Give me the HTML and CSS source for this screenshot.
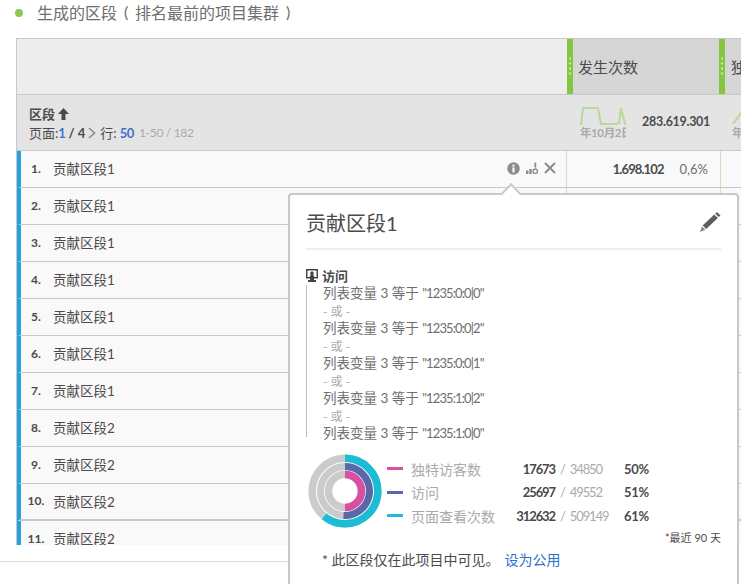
FILE: index.html
```html
<!DOCTYPE html>
<html lang="en">
<head>
  <meta charset="UTF-8">
  <title>生成的区段</title>
  <link rel="stylesheet" href="styles.css">
</head>
<body>
  <div class="page">
    <div class="title">
      <span class="title-dot"></span>
      <span>生成的区段</span><span class="title-paren">(</span><span>排名最前的项目集群</span><span class="title-paren">)</span>
    </div>

    <div class="table">
      <div class="head">
        <div class="head-main"></div>
        <div class="handle"></div>
        <div class="head-col">发生次数</div>
        <div class="handle"></div>
        <div class="head-col">独特访客数</div>
      </div>

      <div class="summary">
        <div class="summary-main">
          <div class="summary-name">区段
            <svg class="sort-arrow" width="11" height="12" viewBox="0 0 11 12"><path d="M5.5 0 L11 6 L7.5 6 L7.5 12 L3.5 12 L3.5 6 L0 6 Z"/></svg>
          </div>
          <div class="pager">
            <span class="pager-label">页面:</span><span class="blue">1</span><span> / 4</span>
            <svg class="pager-next" width="8" height="12" viewBox="0 0 8 12"><path d="M1 1 L6.5 6 L1 11" /></svg>
            <span class="pager-label">行: </span><span class="blue">50</span>
            <span class="muted">1-50 / 182</span>
          </div>
        </div>
        <div class="summary-col">
          <div class="spark">
            <svg width="46" height="22" viewBox="0 0 46 22"><polyline points="1,20 3,3 18,3 21,19 36,19 39,18 41,3 45,19 48,19" /></svg>
            <div class="spark-date">年10月2日</div>
          </div>
          <div class="summary-total">283.619.301</div>
        </div>
        <div class="summary-col">
          <div class="spark">
            <svg width="46" height="22" viewBox="0 0 46 22"><polyline points="1,19 9,8 14,2" /></svg>
            <div class="spark-date">年10月2日</div>
          </div>
        </div>
      </div>

      <div class="row">
        <span class="row-num">1.</span><span class="row-name">贡献区段1</span>
        <span class="row-tools">
          <svg width="13" height="13" viewBox="0 0 13 13"><circle cx="6.5" cy="6.5" r="6.2" fill="#8c8c8c"/><rect x="5.4" y="5.4" width="2.2" height="5" fill="#f9f9f9"/><rect x="5.4" y="2.6" width="2.2" height="1.9" fill="#f9f9f9"/></svg>
          <svg width="12" height="13" viewBox="0 0 12 13" fill="#8c8c8c"><rect x="0" y="8.5" width="2.4" height="3.5"/><rect x="3.2" y="7" width="2.4" height="5"/><rect x="8.4" y="0.5" width="1.8" height="5"/><circle cx="9.2" cy="9.2" r="2.2" fill="none" stroke="#8c8c8c" stroke-width="1.4"/></svg>
          <svg class="row-close" width="12" height="12" viewBox="0 0 12 12"><path d="M1 1 L11 11 M11 1 L1 11"/></svg>
        </span>
        <span class="row-val"><b>1.698.102</b><i>0,6%</i></span>
      </div>
      <div class="row"><span class="row-num">2.</span><span class="row-name">贡献区段1</span><span class="row-val"></span></div>
      <div class="row"><span class="row-num">3.</span><span class="row-name">贡献区段1</span><span class="row-val"></span></div>
      <div class="row"><span class="row-num">4.</span><span class="row-name">贡献区段1</span><span class="row-val"></span></div>
      <div class="row"><span class="row-num">5.</span><span class="row-name">贡献区段1</span><span class="row-val"></span></div>
      <div class="row"><span class="row-num">6.</span><span class="row-name">贡献区段1</span><span class="row-val"></span></div>
      <div class="row"><span class="row-num">7.</span><span class="row-name">贡献区段1</span><span class="row-val"></span></div>
      <div class="row"><span class="row-num">8.</span><span class="row-name">贡献区段2</span><span class="row-val"></span></div>
      <div class="row"><span class="row-num">9.</span><span class="row-name">贡献区段2</span><span class="row-val"></span></div>
      <div class="row row-fold"><span class="row-num">10.</span><span class="row-name">贡献区段2</span><span class="row-val"></span></div>
      <div class="row"><span class="row-num">11.</span><span class="row-name">贡献区段2</span><span class="row-val"></span></div>
    </div>

    <div class="foot-line"></div>

    <div class="popup">
      <div class="popup-arrow"></div>
      <div class="popup-head">
        <span class="popup-title">贡献区段1</span>
        <svg class="popup-edit" width="21" height="20" viewBox="0 0 21 20"><path d="M17 0 L20.5 3.4 L18.8 5.1 L15.3 1.7 Z M14.3 2.6 L17.9 6 L6.2 17 L2.6 13.6 Z"/><path class="popup-edit-tip" d="M1.9 14.4 L5.4 17.8 L0 20 Z"/></svg>
      </div>

      <div class="rule-name">
        <svg width="12" height="13" viewBox="0 0 12 13"><path d="M0 0 H12 V9.5 H8 V11 H10 V13 H2 V11 H4 V9.5 H0 Z M1.5 1.5 V8 H3.6 C3.8 6.8 4.6 6.6 4.7 6 C4 5.2 4 2.6 6 2.6 C8 2.6 8 5.2 7.3 6 C7.4 6.6 8.2 6.8 8.4 8 H10.5 V1.5 Z"/></svg>
        <span>访问</span>
      </div>
      <div class="rules">
        <div class="rule">列表变量 3 等于 <span class="rule-val">"1235:0:0|0"</span></div>
        <div class="rule-or">- 或 -</div>
        <div class="rule">列表变量 3 等于 <span class="rule-val">"1235:0:0|2"</span></div>
        <div class="rule-or">- 或 -</div>
        <div class="rule">列表变量 3 等于 <span class="rule-val">"1235:0:0|1"</span></div>
        <div class="rule-or">- 或 -</div>
        <div class="rule">列表变量 3 等于 <span class="rule-val">"1235:1:0|2"</span></div>
        <div class="rule-or">- 或 -</div>
        <div class="rule">列表变量 3 等于 <span class="rule-val">"1235:1:0|0"</span></div>
      </div>

      <div class="stats">
        <svg class="donut" width="74" height="74" viewBox="0 0 74 74">
          <g fill="none" transform="rotate(-90 37 37)">
            <circle cx="37" cy="37" r="32.8" stroke="#cbcbcb" stroke-width="7.5"/>
            <circle cx="37" cy="37" r="32.8" stroke="#1bbcd6" stroke-width="7.5" pathLength="100" stroke-dasharray="61 39"/>
            <circle cx="37" cy="37" r="24.5" stroke="#cbcbcb" stroke-width="7"/>
            <circle cx="37" cy="37" r="24.5" stroke="#5868a8" stroke-width="7" pathLength="100" stroke-dasharray="51 49"/>
            <circle cx="37" cy="37" r="16.5" stroke="#cbcbcb" stroke-width="7.5"/>
            <circle cx="37" cy="37" r="16.5" stroke="#d94fa4" stroke-width="7.5" pathLength="100" stroke-dasharray="50 50"/>
          </g>
        </svg>
        <div class="stat-grid">
          <span class="stat-bar pink"></span><span class="stat-label">独特访客数</span><span class="stat-num">17673</span><span class="stat-total"><em>/</em>34850</span><span class="stat-pct">50%</span>
          <span class="stat-bar indigo"></span><span class="stat-label">访问</span><span class="stat-num">25697</span><span class="stat-total"><em>/</em>49552</span><span class="stat-pct">51%</span>
          <span class="stat-bar cyan"></span><span class="stat-label">页面查看次数</span><span class="stat-num">312632</span><span class="stat-total"><em>/</em>509149</span><span class="stat-pct">61%</span>
        </div>
      </div>
      <div class="stats-note">*最近 90 天</div>
      <div class="popup-foot">* 此区段仅在此项目中可见。<a class="popup-link">设为公用</a></div>
    </div>
  </div>
</body>
</html>
```

FILE: styles.css
```css
html, body {
  margin: 0;
  padding: 0;
  background-color: white;
}
body {
  font-family: Lato, "Noto Sans CJK SC", sans-serif;
  color: #4b4b4b;
}
.page {
  position: relative;
  width: 741px;
  height: 584px;
  overflow: hidden;
}
.title {
  display: flex;
  align-items: center;
  height: 23px;
  padding-left: 15px;
  font-size: 16px;
  color: #6e6e6e;
  white-space: nowrap;
}
.title-dot {
  width: 8px;
  height: 8px;
  margin: 3px 14px 0 0;
  border-radius: 50%;
  background-color: #8cc84b;
}
.title-paren {
  width: 18px;
  text-align: center;
}
.table {
  width: 725px;
  height: 507px;
  margin: 15px 0 0 16px;
  overflow: hidden;
  border-left: 1px solid #c8c8c8;
  box-sizing: border-box;
}
.head {
  display: flex;
  height: 57px;
  border-top: 1px solid #c8c8c8;
  border-bottom: 1px solid #c8c8c8;
  box-sizing: border-box;
}
.head-main {
  flex: none;
  width: 550px;
  background-color: #ededed;
}
.handle {
  flex: none;
  position: relative;
  width: 6px;
  background-color: #84c63f;
}
.handle::after {
  content: "";
  position: absolute;
  left: 0;
  top: 17px;
  width: 6px;
  height: 20px;
  background-image: radial-gradient(circle, #cbe6a8 1px, transparent 1.3px);
  background-size: 6px 5px;
}
.head-col {
  flex: none;
  display: flex;
  align-items: center;
  width: 146px;
  padding: 0 0 1px 5px;
  box-sizing: border-box;
  background-color: #d6d6d6;
  font-size: 15px;
  white-space: nowrap;
  overflow: hidden;
}
.head-col:last-child {
  padding-left: 6px;
}
.summary {
  display: flex;
  height: 56px;
  background-color: #e4e4e4;
  border-bottom: 1px solid #c8c8c8;
  box-sizing: border-box;
}
.summary-main {
  flex: none;
  width: 556px;
  padding: 10px 0 0 12px;
  box-sizing: border-box;
}
.summary-name {
  display: flex;
  align-items: center;
  gap: 3px;
  font-size: 13px;
  font-weight: bold;
  line-height: 18px;
}
.sort-arrow {
  fill: #4b4b4b;
}
.pager {
  display: flex;
  align-items: center;
  white-space: pre;
  font-size: 13px;
  font-weight: 700;
  line-height: 20px;
}
.pager-label {
  font-weight: 400;
}
.pager-next {
  margin: 0 4px 0 3px;
  fill: none;
  stroke: #8c8c8c;
  stroke-width: 1.6;
}
.blue {
  color: #3f73c9;
  letter-spacing: -0.5px;
}
.muted {
  margin-left: 5px;
  font-size: 12px;
  letter-spacing: -0.3px;
  color: #aaaaaa;
  font-weight: normal;
}
.summary-col {
  flex: none;
  display: flex;
  width: 152px;
  padding-left: 7px;
  box-sizing: border-box;
}
.spark {
  flex: none;
  width: 46px;
  padding-top: 10px;
  overflow: hidden;
}
.spark svg {
  display: block;
  fill: none;
  stroke: #b9d99a;
  stroke-width: 2;
}
.spark-date {
  margin-top: -2px;
  font-size: 11.5px;
  letter-spacing: -0.4px;
  font-weight: bold;
  color: #aaaaaa;
  line-height: 16px;
  white-space: nowrap;
}
.summary-total {
  width: 84px;
  padding-top: 19px;
  font-size: 12.5px;
  letter-spacing: -0.3px;
  font-weight: bold;
  text-align: right;
}
.row {
  display: flex;
  align-items: center;
  height: 37px;
  padding-bottom: 2px;
  border-left: 4px solid #27a1dc;
  border-bottom: 1px solid #c8c8c8;
  box-sizing: border-box;
  background-color: #f9f9f9;
  font-size: 14px;
}
.row-fold {
  border-bottom-width: 2px;
}
.row-num {
  width: 30px;
  font-size: 12px;
  font-weight: 700;
  text-align: center;
}
.row-name {
  flex: 1;
  margin-left: 2px;
  font-size: 13.5px;
}
.row-tools {
  display: flex;
  align-items: center;
  gap: 6px;
  margin-right: 10px;
}
.row-close {
  fill: none;
  stroke: #8c8c8c;
  stroke-width: 2;
}
.row-val {
  display: flex;
  flex: none;
  justify-content: flex-end;
  align-items: center;
  align-self: stretch;
  width: 155px;
  margin: 0 20px -2px 0;
  padding: 0 12px 0 0;
  box-sizing: border-box;
  border-left: 1px solid #cfe0c0;
  border-right: 1px solid #cfe0c0;
  font-size: 13px;
}
.row-val b {
  font-weight: 700;
  letter-spacing: -0.9px;
}
.row-val i {
  margin-left: 16px;
  font-style: normal;
  font-size: 13px;
  color: #6e6e6e;
}
.foot-line {
  width: 288px;
  height: 1px;
  margin-top: 16px;
  background-color: #dddddd;
}
.popup {
  position: absolute;
  left: 288px;
  top: 193px;
  width: 451px;
  height: 420px;
  padding: 0 16px;
  box-sizing: border-box;
  background-color: white;
  border: 2px solid #c8c8c8;
  border-radius: 4px;
}
.popup-arrow {
  position: absolute;
  left: 214px;
  top: -9px;
  width: 14px;
  height: 14px;
  background-color: white;
  border-top: 2px solid #c8c8c8;
  border-left: 2px solid #c8c8c8;
  transform: rotate(45deg);
  box-sizing: border-box;
}
.popup-head {
  display: flex;
  align-items: center;
  justify-content: space-between;
  height: 53px;
  border-bottom: 2px solid #eeeeee;
  margin-bottom: 17px;
}
.popup-title {
  font-size: 20px;
  line-height: 27px;
  margin-top: 4px;
}
.popup-edit {
  fill: #5e5e5e;
  margin-top: 1px;
}
.popup-edit-tip {
  fill: #8a8a8a;
}
.rule-name {
  display: flex;
  align-items: center;
  gap: 4px;
  height: 16px;
  margin-bottom: 2px;
  font-size: 13px;
  font-weight: bold;
}
.rule-name svg {
  fill: #444444;
}
.rules {
  height: 152px;
  padding-left: 16px;
  box-sizing: border-box;
  border-left: 1px solid #bbbbbb;
  font-size: 13.5px;
  line-height: 17.5px;
}
.rule {
  white-space: nowrap;
  color: #6e6e6e;
}
.rule-val {
  font-size: 13px;
  letter-spacing: -0.9px;
}
.rule-or {
  font-size: 12px;
  color: #aaaaaa;
}
.stats {
  display: flex;
  align-items: center;
  margin-top: 17px;
}
.donut {
  flex: none;
  margin-left: 2px;
}
.stat-grid {
  display: grid;
  grid-template-columns: 16px 105px 47px 52px auto;
  grid-auto-rows: 23.5px;
  align-items: center;
  margin-left: 5px;
  margin-top: 2px;
}
.stat-bar {
  height: 3px;
}
.pink { background-color: #d94fa4; }
.indigo { background-color: #5868a8; }
.cyan { background-color: #1bbcd6; }
.stat-label {
  margin-left: 8px;
  font-size: 14px;
  color: #aaaaaa;
  white-space: nowrap;
}
.stat-num {
  font-size: 13px;
  font-weight: 700;
  letter-spacing: -1.1px;
  text-align: right;
}
.stat-total {
  font-size: 13px;
  color: #aaaaaa;
  letter-spacing: -1.1px;
  white-space: nowrap;
}
.stat-total em {
  margin: 0 5px;
  font-style: normal;
}
.stat-pct {
  margin-left: 17px;
  font-size: 13px;
  letter-spacing: -0.3px;
  font-weight: 700;
}
.stats-note {
  margin-top: 1px;
  font-size: 11px;
  text-align: right;
}
.popup-foot {
  margin-top: 4px;
  padding-left: 16px;
  font-size: 14px;
}
.popup-link {
  margin-left: 5px;
  color: #2d6ec9;
}
```
